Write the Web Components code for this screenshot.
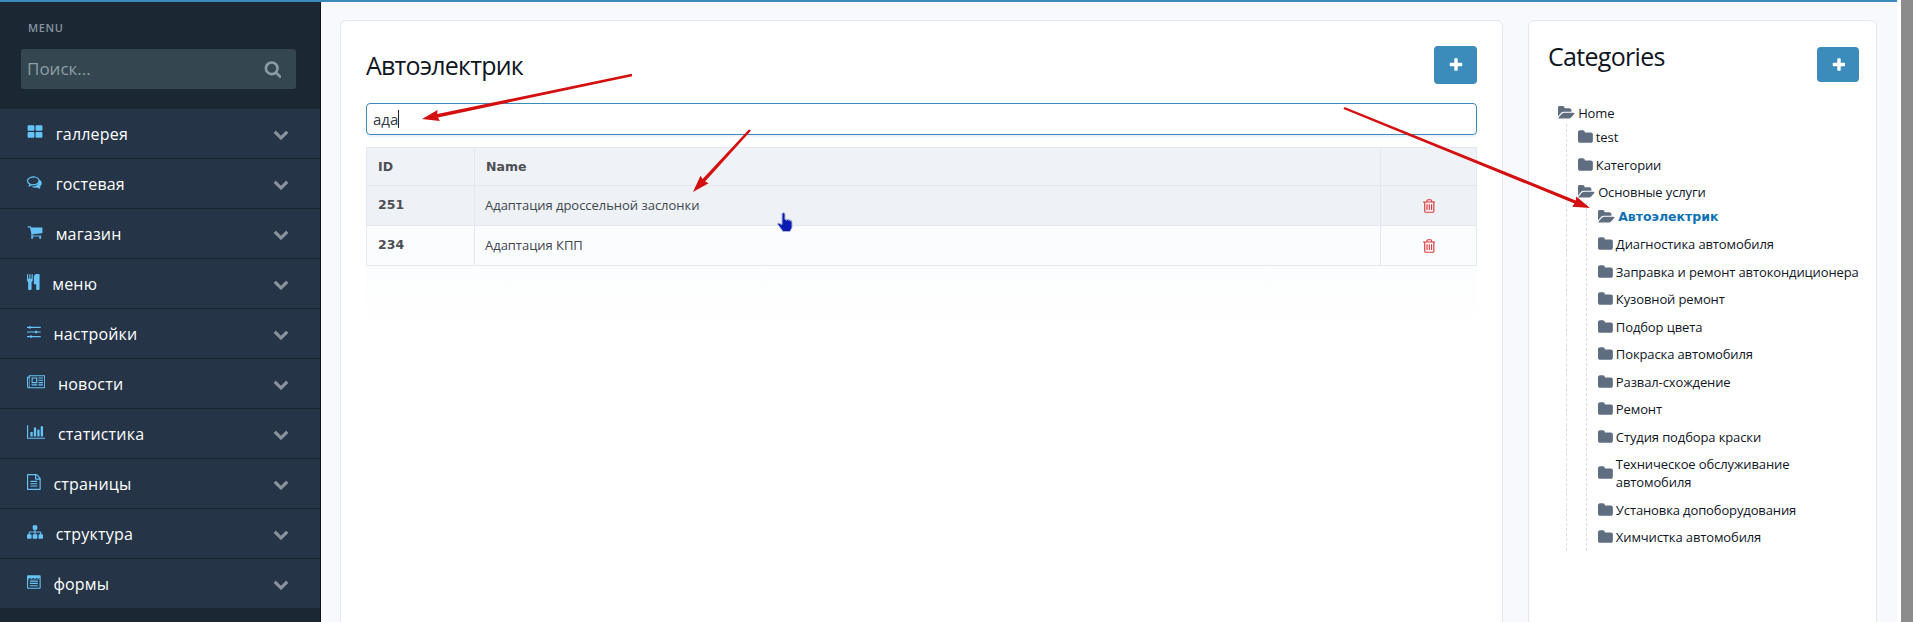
<!DOCTYPE html>
<html lang="ru">
<head>
<meta charset="utf-8">
<title>Автоэлектрик</title>
<style>
html, body { margin: 0; height: 622px; overflow: hidden; background: #fff; }
body { font-family: "Open Sans", "Noto Sans", sans-serif; }
</style>
</head>
<body>
<admin-page>
  <side-nav slot="nav">
    <nav-item icon="grid">галлерея</nav-item>
    <nav-item icon="comments">гостевая</nav-item>
    <nav-item icon="cart">магазин</nav-item>
    <nav-item icon="cutlery">меню</nav-item>
    <nav-item icon="sliders">настройки</nav-item>
    <nav-item icon="news">новости</nav-item>
    <nav-item icon="chart">статистика</nav-item>
    <nav-item icon="file">страницы</nav-item>
    <nav-item icon="sitemap">структура</nav-item>
    <nav-item icon="form">формы</nav-item>
  </side-nav>

  <content-card class="main" heading="Автоэлектрик">
    <search-field value="ада"></search-field>
    <data-table></data-table>
  </content-card>

  <content-card class="side" heading="Categories" compact>
    <tree-node label="Home" open>
      <tree-node label="test"></tree-node>
      <tree-node label="Категории"></tree-node>
      <tree-node label="Основные услуги" open>
        <tree-node label="Автоэлектрик" open active></tree-node>
        <tree-node label="Диагностика автомобиля"></tree-node>
        <tree-node label="Заправка и ремонт автокондиционера"></tree-node>
        <tree-node label="Кузовной ремонт"></tree-node>
        <tree-node label="Подбор цвета"></tree-node>
        <tree-node label="Покраска автомобиля"></tree-node>
        <tree-node label="Развал-схождение"></tree-node>
        <tree-node label="Ремонт"></tree-node>
        <tree-node label="Студия подбора краски"></tree-node>
        <tree-node label="Техническое обслуживание автомобиля"></tree-node>
        <tree-node label="Установка допоборудования"></tree-node>
        <tree-node label="Химчистка автомобиля"></tree-node>
      </tree-node>
    </tree-node>
  </content-card>
</admin-page>
<screen-marks></screen-marks>

<script>
// font-awesome style glyphs, 1792 units high. width is the glyph advance
const ICONS = {
  grid: [1792, "M832 1024v384q0 52-38 90t-90 38h-512q-52 0-90-38t-38-90v-384q0-52 38-90t90-38h512q52 0 90 38t38 90zm0-768v384q0 52-38 90t-90 38h-512q-52 0-90-38t-38-90v-384q0-52 38-90t90-38h512q52 0 90 38t38 90zm896 768v384q0 52-38 90t-90 38h-512q-52 0-90-38t-38-90v-384q0-52 38-90t90-38h512q52 0 90 38t38 90zm0-768v384q0 52-38 90t-90 38h-512q-52 0-90-38t-38-90v-384q0-52 38-90t90-38h512q52 0 90 38t38 90z"],
  comments: [1792, "M704 384q-153 0-286 52t-211 140-78 189q0 80 50 153t140 126l97 56-35 84q34-20 62-39l44-31 53 10q82 15 164 15 153 0 286-52t211-140 78-189-78-189-211-140-286-45zm0-128q191 0 353 69t256 187 94 257-94 257-256 187-353 69q-86 0-176-16-124 88-278 128-36 9-86 16h-3q-11 0-20.500-8t-11.500-21q-1-3-1-6.500t.5-6.500 2-6l2.500-5 3.500-5.500 4-5 4.500-5 4-4.500q5-6 23-25t26-29.500 22.500-29 25-38.500 20.500-44q-124-72-195-177t-71-224q0-139 94-257t256-187 353-69zm822 1169q5 3 8 8t3 11q0 3-.5 6.500t-1.500 6.500-3 5l-4 5-4 5.500-4.500 5-4 4.500q-5 6-23 25t-26 29.500-22.500 29-25 38.500-20.500 44q-150-38-278-128-90 16-176 16-271 0-472-132 58 4 88 4 161 0 309-45t264-129q125-92 192-212t67-254q0-77-23-152 129 71 204 178t75 230q0 120-71 224.500t-195 176.500z"],
  cart: [1792, "M704 1536q0 52-38 90t-90 38-90-38-38-90 38-90 90-38 90 38 38 90zm896 0q0 52-38 90t-90 38-90-38-38-90 38-90 90-38 90 38 38 90zm128-1088v512q0 24-16.500 42.500t-40.500 21.500l-1044 122q13 60 13 70 0 16-24 64h920q26 0 45 19t19 45-19 45-45 19h-1024q-26 0-45-19t-19-45q0-11 8-31.500t16-36 21.500-40 15.500-29.500l-177-823h-204q-26 0-45-19t-19-45 19-45 45-19h256q16 0 28.500 6.500t19.500 15.500 13 24.500 8 26 5.500 29.500 4.500 26h1201q26 0 45 19t19 45z"],
  cutlery: [1408, "M640 64v640q0 61-35.500 111t-92.500 70v779q0 52-38 90t-90 38h-128q-52 0-90-38t-38-90v-779q-57-20-92.500-70t-35.500-111v-640q0-26 19-45t45-19 45 19 19 45v416q0 26 19 45t45 19 45-19 19-45v-416q0-26 19-45t45-19 45 19 19 45v416q0 26 19 45t45 19 45-19 19-45v-416q0-26 19-45t45-19 45 19 19 45zm768 0v1600q0 52-38 90t-90 38h-128q-52 0-90-38t-38-90v-512h-224q-13 0-22.500-9.500t-9.500-22.500v-800q0-132 94-226t226-94h256q26 0 45 19t19 45z"],
  sliders: [1536, "M0 320h192v128h-192zM448 320h1088v128h-1088zM240 256h160q48 0 48 48v160q0 48-48 48h-160q-48 0-48-48v-160q0-48 48-48zM0 832h896v128h-896zM1152 832h384v128h-384zM944 768h160q48 0 48 48v160q0 48-48 48h-160q-48 0-48-48v-160q0-48 48-48zM0 1344h320v128h-320zM576 1344h960v128h-960zM368 1280h160q48 0 48 48v160q0 48-48 48h-160q-48 0-48-48v-160q0-48 48-48z"],
  news: [2048, "M1024 512h-384v384h384v-384zm128 640v128h-640v-128h640zm0-768v640h-640v-640h640zm640 768v128h-512v-128h512zm0-256v128h-512v-128h512zm0-256v128h-512v-128h512zm0-256v128h-512v-128h512zm128 1024v-1152h-1600v1152q0 40-15 64h1551q26 0 45-19t19-45zm128-1280v1280q0 80-56 136t-136 56h-1664q-80 0-136-56t-56-136v-1088h192v-192h1856zm-1920 1280q0 26 19 45t45 19 45-19 19-45v-960h-128v960z"],
  chart: [2048, "M640 896v512h-256v-512h256zm384-512v1024h-256v-1024h256zm1024 1152v128h-2048v-1536h128v1408h1920zm-640-896v768h-256v-768h256zm384-384v1152h-256v-1152h256z"],
  file: [1536, "M1468 380q28 28 48 76t20 88v1152q0 40-28 68t-68 28h-1344q-40 0-68-28t-28-68v-1600q0-40 28-68t68-28h896q40 0 88 20t76 48zm-444-244v376h376q-10-29-22-41l-313-313q-12-12-41-22zm384 1528v-1024h-416q-40 0-68-28t-28-68v-416h-768v1536h1280zm-1024-864q0-14 9-23t23-9h704q14 0 23 9t9 23v64q0 14-9 23t-23 9h-704q-14 0-23-9t-9-23v-64zm736 224q14 0 23 9t9 23v64q0 14-9 23t-23 9h-704q-14 0-23-9t-9-23v-64q0-14 9-23t23-9h704zm0 256q14 0 23 9t9 23v64q0 14-9 23t-23 9h-704q-14 0-23-9t-9-23v-64q0-14 9-23t23-9h704z"],
  sitemap: [1792, "M1792 1248v320q0 40-28 68t-68 28h-320q-40 0-68-28t-28-68v-320q0-40 28-68t68-28h96v-192h-512v192h96q40 0 68 28t28 68v320q0 40-28 68t-68 28h-320q-40 0-68-28t-28-68v-320q0-40 28-68t68-28h96v-192h-512v192h96q40 0 68 28t28 68v320q0 40-28 68t-68 28h-320q-40 0-68-28t-28-68v-320q0-40 28-68t68-28h96v-192q0-52 38-90t90-38h512v-192h-96q-40 0-68-28t-28-68v-320q0-40 28-68t68-28h320q40 0 68 28t28 68v320q0 40-28 68t-68 28h-96v192h512q52 0 90 38t38 90v192h96q40 0 68 28t28 68z"],
  form: [1536, "M128 128h1280q53 0 90.500 37.500t37.500 90.500v1280q0 53-37.500 90.500t-90.500 37.500h-1280q-53 0-90.500-37.500t-37.500-90.500v-1280q0-53 37.500-90.500t90.500-37.500zm-4 448v960q0 4 4 4h1280q4 0 4-4v-960zm196 160h896v128h-896zm0 256h896v128h-896zm0 256h896v128h-896zm-192-800l192 110 192-110 192 110 192-110 192 110 192-110 192 110v-120q0-4-4-4h-1280q-4 0-4 4z"],
  chevron: [1792, "M1683 808l-742 741q-19 19-45 19t-45-19l-742-741q-19-19-19-45.500t19-45.500l166-165q19-19 45-19t45 19l531 531 531-531q19-19 45-19t45 19l166 165q19 19 19 45.500t-19 45.500z"],
  plus: [1600, "M1600 736v192q0 40-28 68t-68 28h-416v416q0 40-28 68t-68 28h-192q-40 0-68-28t-28-68v-416h-416q-40 0-68-28t-28-68v-192q0-40 28-68t68-28h416v-416q0-40 28-68t68-28h192q40 0 68 28t28 68v416h416q40 0 68 28t28 68z"],
  search: [1728, "M1216 832q0-185-131.500-316.500t-316.500-131.500-316.500 131.500-131.500 316.500 131.500 316.500 316.500 131.500 316.500-131.500 131.500-316.500zm512 832q0 52-38 90t-90 38q-54 0-90-38l-343-342q-179 124-399 124-143 0-273.500-55.500t-225-150-150-225-55.500-273.500 55.500-273.500 150-225 225-150 273.500-55.500 273.500 55.500 225 150 150 225 55.500 273.500q0 220-124 399l343 343q37 37 37 90z"],
  trash: [1408, "M512 736v576q0 14-9 23t-23 9h-64q-14 0-23-9t-9-23v-576q0-14 9-23t23-9h64q14 0 23 9t9 23zm256 0v576q0 14-9 23t-23 9h-64q-14 0-23-9t-9-23v-576q0-14 9-23t23-9h64q14 0 23 9t9 23zm256 0v576q0 14-9 23t-23 9h-64q-14 0-23-9t-9-23v-576q0-14 9-23t23-9h64q14 0 23 9t9 23zm128 724v-948h-896v948q0 22 7 40.500t14.500 27 10.500 8.500h832q3 0 10.500-8.500t14.500-27 7-40.500zm-672-1076h448l-48-117q-7-9-17-11h-317q-10 2-17 11zm928 32v64q0 14-9 23t-23 9h-96v948q0 83-47 143.500t-113 60.500h-832q-66 0-113-58.500t-47-141.500v-952h-96q-14 0-23-9t-9-23v-64q0-14 9-23t23-9h309l70-167q15-37 54-63t79-26h320q40 0 79 26t54 63l70 167h309q14 0 23 9t9 23z"],
  folder: [1664, "M1664 608v704q0 92-66 158t-158 66h-1216q-92 0-158-66t-66-158v-960q0-92 66-158t158-66h320q92 0 158 66t66 158v32h672q92 0 158 66t66 158z"],
  folderOpen: [1920, "M1845 931q0 35-35 74l-336 396q-43 51-120.500 86.500t-143.500 35.500h-1088q-34 0-60.500-13t-26.500-43q0-35 35-74l336-396q43-51 120.500-86.500t143.500-35.500h1088q34 0 60.500 13t26.500 43zm-343-345v160h-832q-94 0-197 47.500t-164 119.500l-337 396-5 6q0-4-.5-12.500t-.5-12.500v-960q0-92 66-158t158-66h320q92 0 158 66t66 158v32h544q92 0 158 66t66 158z"]
};

function icon(name, size) {
  const [w, d] = ICONS[name];
  const px = (w / 1792 * size).toFixed(2);
  return `<svg width="${px}" height="${size}" viewBox="0 0 ${w} 1792" fill="currentColor" aria-hidden="true"><path d="${d}"/></svg>`;
}

class AdminPage extends HTMLElement {
  constructor() {
    super();
    this.attachShadow({mode: 'open'}).innerHTML = `
<style>
:host { display: block; height: 622px; overflow: hidden; }
.top { height: 2px; width: 1897px; background: #3a8bbb; }
.row { display: flex; width: 1901px; height: 620px; }
.work {
  display: flex; gap: 25px; align-items: flex-start;
  width: 1576px; box-sizing: border-box; padding: 18px 20px 0 19px;
  margin-right: 4px; background: #f8f9fd;
}
.scroll { position: fixed; top: 0; right: 0; bottom: 0; width: 12px; background: #8c8c8c; }
</style>
<div class="top"></div>
<div class="row">
  <slot name="nav"></slot>
  <div class="work"><slot></slot></div>
</div>
<div class="scroll"></div>`;
  }
}

class SideNav extends HTMLElement {
  constructor() {
    super();
    this.attachShadow({mode: 'open'}).innerHTML = `
<style>
:host {
  display: block; flex: none; width: 321px; height: 620px;
  box-sizing: border-box; background: #1c2734; border-right: 1px solid #10151d;
}
.head { height: 107px; box-sizing: border-box; padding: 19px 24px 0 21px; }
.label { font: 600 11px/14px "Open Sans", sans-serif; letter-spacing: .6px; color: #8793a0; padding-left: 7px; }
.search {
  display: flex; align-items: center; justify-content: space-between;
  height: 40px; margin-top: 14px; padding: 0 15px 0 6px; box-sizing: border-box;
  background: #344650; border-radius: 3px; color: #8c9ea5;
  font: 17px "Open Sans", sans-serif; width: 275px;
}
.search span { margin-top: -2px; }
.search svg { color: #8a9ca4; }
</style>
<div class="head">
  <div class="label">MENU</div>
  <div class="search"><span>Поиск...</span>${icon('search', 18)}</div>
</div>
<slot></slot>`;
  }
}

class NavItem extends HTMLElement {
  constructor() {
    super();
    this.attachShadow({mode: 'open'}).innerHTML = `
<style>
:host {
  display: flex; align-items: center; height: 50px; box-sizing: border-box;
  padding: 0 31px 0 27px; background: #253446; border-bottom: 1px solid #1b2531;
  color: #fff; font: 16px "Open Sans", sans-serif; letter-spacing: .2px;
}
.ico { display: flex; color: #66c3f8; margin: -3px 12.7px 0 0; }
.txt { flex: 1; }
.chev { display: flex; color: #8a929b; }
</style>
<span class="ico"></span><span class="txt"><slot></slot></span><span class="chev">${icon('chevron', 16)}</span>`;
  }
  connectedCallback() {
    this.shadowRoot.querySelector('.ico').innerHTML = icon(this.getAttribute('icon'), 16);
  }
}

class ContentCard extends HTMLElement {
  constructor() {
    super();
    this.attachShadow({mode: 'open'}).innerHTML = `
<style>
:host {
  display: block; box-sizing: border-box; height: 720px; flex: none;
  width: 1163px; padding: 25px 25px 0;
  background: #fff; border: 1px solid #e3e7ee; border-radius: 6px;
}
:host([compact]) { width: 349px; padding: 26px 17px 0 19px; }
header { display: flex; justify-content: space-between; align-items: center; margin-bottom: 19px; }
:host([compact]) header { align-items: flex-start; margin-bottom: 17px; }
h2 { margin: 0; font: 400 25px/36px "Open Sans", sans-serif; letter-spacing: -.8px; color: #10161f; }
:host([compact]) h2 { margin-top: -9.5px; letter-spacing: -.7px; }
plus-button { flex: none; }
:host([compact]) plus-button { width: 42px; height: 35px; }
::slotted(tree-node) { margin-left: 10px; margin-right: -8px; }
</style>
<header><h2></h2><plus-button></plus-button></header>
<slot></slot>`;
  }
  connectedCallback() {
    this.shadowRoot.querySelector('h2').textContent = this.getAttribute('heading');
  }
}

class PlusButton extends HTMLElement {
  constructor() {
    super();
    this.attachShadow({mode: 'open'}).innerHTML = `
<style>
:host {
  display: flex; align-items: center; justify-content: center;
  width: 43px; height: 38px; box-sizing: border-box;
  background: #3b8bbb; border-radius: 4px; color: #fff;
}
</style>${icon('plus', 16)}`;
  }
}

class SearchField extends HTMLElement {
  constructor() {
    super();
    this.attachShadow({mode: 'open'}).innerHTML = `
<style>
:host {
  display: flex; align-items: center; height: 32px; box-sizing: border-box;
  padding: 0 6px; margin-bottom: 12px;
  border: 1px solid #3a8bbb; border-radius: 4px; background: #fff;
  box-shadow: 0 2px 2px #eaf3f9;
  font: 15px "Open Sans", sans-serif; color: #333b44;
}
i { width: 1px; height: 18px; background: #20262d; }
</style><span></span><i></i>`;
  }
  connectedCallback() {
    this.shadowRoot.querySelector('span').textContent = this.getAttribute('value');
  }
}

const ROWS = [
  {id: 251, name: "Адаптация дроссельной заслонки"},
  {id: 234, name: "Адаптация КПП"}
];

class DataTable extends HTMLElement {
  constructor() {
    super();
    const body = ROWS.map((r, i) => `
<tr class="${i % 2 ? 'odd' : 'even'}"><td class="id">${r.id}</td><td class="name">${r.name}</td><td class="act">${icon('trash', 16)}</td></tr>`).join('');
    this.attachShadow({mode: 'open'}).innerHTML = `
<style>
:host { display: block; }
table { width: 100%; border-collapse: collapse; table-layout: fixed; font: 13px "Open Sans", sans-serif; color: #40464d; }
th, td { border: 1px solid #e3e7ee; padding: 0 10px 2px 11px; text-align: left; height: 37px; }
th { height: 36px; padding-bottom: 1px; background: #eff2f7; }
th, .id { font: 700 12.5px "DejaVu Sans", sans-serif; color: #4d4f54; }
.name { padding-left: 10px; letter-spacing: -.03px; }
.even { background: #eef2f6; }
.odd { background: #fbfcfe; }
.act { text-align: center; color: #de3a3a; }
.act svg { vertical-align: middle; }
col.a { width: 108px; } col.c { width: 96px; }
.fade { height: 74px; background: linear-gradient(#fcfdfe, #fff); }
</style>
<table>
<colgroup><col class="a"><col><col class="c"></colgroup>
<thead><tr><th>ID</th><th>Name</th><th></th></tr></thead>
<tbody>${body}</tbody>
</table>
<div class="fade"></div>`;
  }
}

class TreeNode extends HTMLElement {
  constructor() {
    super();
    this.attachShadow({mode: 'open'}).innerHTML = `
<style>
:host {
  display: block; font: 13px/18px "Open Sans", sans-serif; letter-spacing: -.12px; color: #10161f;
}
.line { display: flex; align-items: center; padding: 4.75px 0; }
.ico { display: flex; flex: none; color: #5f6d80; margin-right: 3px; }
:host([active]) .name { font: 700 12.5px/18px "DejaVu Sans", sans-serif; letter-spacing: 0; color: #0d72b4; }
.kids { display: none; margin: -3px 0 0 8px; padding-left: 11px; border-left: 1px dashed #d8dde4; }
.kids.has { display: block; }
</style>
<div class="line"><span class="ico"></span><span class="name"></span></div>
<div class="kids"><slot></slot></div>`;
  }
  connectedCallback() {
    const open = this.hasAttribute('open');
    this.shadowRoot.querySelector('.ico').innerHTML = icon(open ? 'folderOpen' : 'folder', 16);
    this.shadowRoot.querySelector('.name').textContent = this.getAttribute('label');
    this.shadowRoot.querySelector('.kids').classList.toggle('has', this.children.length > 0);
  }
}

// red arrows and the pointer drawn on top of the screenshot
function arrow(x1, y1, x2, y2) {
  const len = Math.hypot(x2 - x1, y2 - y1), ux = (x2 - x1) / len, uy = (y2 - y1) / len;
  const at = (along, side) => `${(x2 - ux * along - uy * side).toFixed(1)},${(y2 - uy * along + ux * side).toFixed(1)}`;
  const pts = [at(len, 1.2), at(16, 1.7), at(17, 5.5), at(0, 0), at(17, -5.5), at(16, -1.7), at(len, -1.2)];
  return `<polygon points="${pts.join(' ')}"/>`;
}

class ScreenMarks extends HTMLElement {
  constructor() {
    super();
    this.attachShadow({mode: 'open'}).innerHTML = `
<style>
:host { position: absolute; left: 0; top: 0; width: 1913px; height: 622px; pointer-events: none; }
svg { display: block; }
</style>
<svg width="1913" height="622">
  <g fill="#d40f0f">
    ${arrow(632, 75, 422, 119)}
    ${arrow(750, 130, 693, 192)}
    ${arrow(1344, 108, 1590, 208)}
  </g>
  <path d="M782 213.500q1.500-1.500 3 0v6l1.500-.5v1.500l1.500-1.500 1 1.500 1-1 .5 1.500 1-.5 .5 2v5l-2 4h-7l-5.500-7.500 1-1 3.500 1.500z" fill="#0a1cb4" stroke="#aeb4cf" stroke-width="1"/>
</svg>`;
  }
}

customElements.define('admin-page', AdminPage);
customElements.define('side-nav', SideNav);
customElements.define('nav-item', NavItem);
customElements.define('content-card', ContentCard);
customElements.define('plus-button', PlusButton);
customElements.define('search-field', SearchField);
customElements.define('data-table', DataTable);
customElements.define('tree-node', TreeNode);
customElements.define('screen-marks', ScreenMarks);
</script>
</body>
</html>
